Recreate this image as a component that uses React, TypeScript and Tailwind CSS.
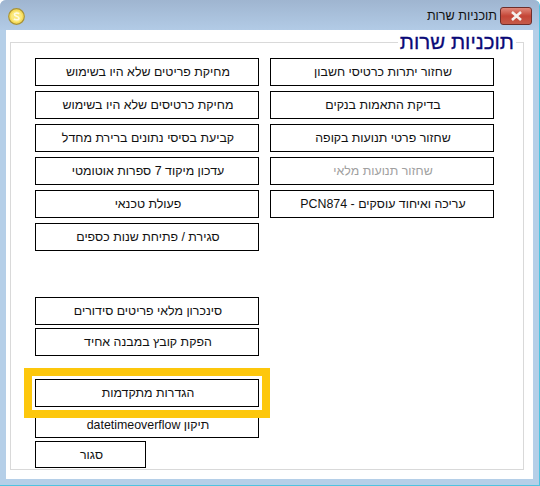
const leftTop = [
  "מחיקת פריטים שלא היו בשימוש",
  "מחיקת כרטיסים שלא היו בשימוש",
  "קביעת בסיסי נתונים ברירת מחדל",
  "עדכון מיקוד 7 ספרות אוטומטי",
  "פעולת טכנאי",
  "סגירת / פתיחת שנות כספים",
];

const rightCol = [
  { label: "שחזור יתרות כרטיסי חשבון" },
  { label: "בדיקת התאמות בנקים" },
  { label: "שחזור פרטי תנועות בקופה" },
  { label: "שחזור תנועות מלאי", disabled: true },
  { label: "עריכה ואיחוד עוסקים - PCN874" },
];

const Btn = ({ label, disabled, className = "w-[224px] h-[28px]" }: { label: string; disabled?: boolean; className?: string }) => (
  <button
    dir="rtl"
    className={`${className} shrink-0 border border-black bg-white pl-[2px] pt-[1px] text-[12.4px] leading-none text-center ${disabled ? "text-[#a0a0a0]" : "text-[#111]"}`}
  >
    {label}
  </button>
);

const Coin = () => (
  <svg width="17" height="17" viewBox="0 0 17 17">
    <circle cx="8.5" cy="8.5" r="7.8" fill="#f7dc5a" stroke="#a89338" strokeWidth="1.2" />
    <circle cx="8.5" cy="8.5" r="5.5" fill="#fbe97f" />
    <path d="M11 6 C10 4.6 6.4 4.8 6.4 6.6 C6.4 8.6 11 8 11 10.2 C11 12.2 7 12.2 6 10.8" fill="none" stroke="#fffbe0" strokeWidth="1.6" />
  </svg>
);

const App = () => {
  return (
    <div
      className="relative w-[540px] h-[486px] overflow-hidden flex flex-col rounded-t-[6px] border-r border-b border-[#4fc3e0] bg-[#b5cfe8]"
      style={{ fontFamily: '"Liberation Sans", Arial, sans-serif' }}
    >
      <div className="h-[30px] shrink-0 flex items-center justify-between pl-[8px] pr-[7px] pt-[6px] pb-[3px] bg-gradient-to-b from-[#9fb5d0] to-[#b2cbe6]">
        <Coin />
        <div className="flex items-center gap-[3px]">
          <span dir="rtl" className="text-[12.6px] text-[#111]">תוכניות שרות</span>
          <div className="w-[32px] h-[18px] flex items-center justify-center rounded-[3px] border border-[#6e2e2a] bg-gradient-to-b from-[#e0897c] via-[#c44536] to-[#c55a49]">
            <svg width="13" height="10" viewBox="0 0 13 10">
              <path d="M2 1 L11 9 M11 1 L2 9" stroke="#f4f1ee" strokeWidth="2.6" />
            </svg>
          </div>
        </div>
      </div>

      <div className="ml-[6px] mr-[6px] h-[449px] shrink-0 bg-white pt-[12px] pl-[4px] pr-[9px]">
        <div className="relative h-[428px] border border-[#d9d9d9] pt-[15px] pl-[24px] pr-[29px] flex justify-between">
          <h1 dir="rtl" className="absolute right-[7px] top-[-12px] bg-white px-[2px] text-[20.5px] leading-[22px] text-[#0a0a78] [-webkit-text-stroke:0.3px_#0a0a78]">
            תוכניות שרות
          </h1>

          <div className="flex flex-col">
            <div className="flex flex-col gap-[5px]">
              {leftTop.map((label) => (
                <Btn key={label} label={label} />
              ))}
            </div>
            <div className="mt-[46px] flex flex-col gap-[3px]">
              <Btn label="סינכרון מלאי פריטים סידורים" />
              <Btn label="הפקת קובץ במבנה אחיד" />
            </div>
            <div className="mt-[23px]">
              <Btn label="הגדרות מתקדמות" />
            </div>
            <div className="mt-[4px]">
              <Btn label="תיקון datetimeoverflow" className="w-[224px] h-[27px]" />
            </div>
            <div className="mt-[3px]">
              <Btn label="סגור" className="w-[111px] h-[27px]" />
            </div>
          </div>

          <div className="flex flex-col gap-[5px]">
            {rightCol.map((b) => (
              <Btn key={b.label} label={b.label} disabled={b.disabled} />
            ))}
          </div>
        </div>
      </div>

      {/* yellow highlight drawn over the screenshot */}
      <div className="absolute left-[24px] top-[368px] w-[246px] h-[50px] border-[8px] border-[#fdc70c]" />
    </div>
  );
};

export default App;
